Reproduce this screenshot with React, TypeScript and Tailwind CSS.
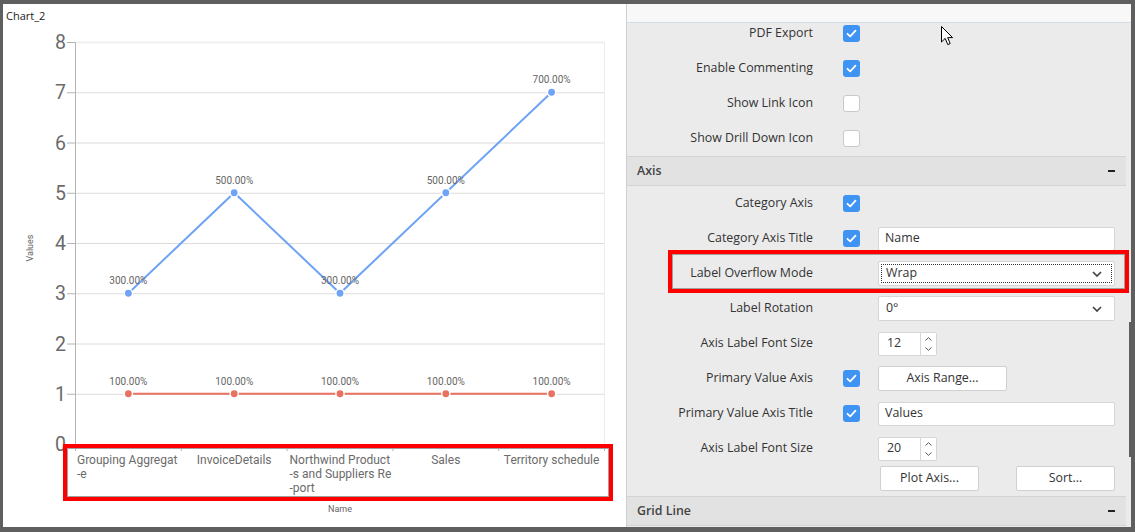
import React from "react";

const X0 = 75.5;
const CW = 105.8;
const cx = (i: number) => X0 + CW * (i + 0.5);
const cy = (v: number) => 444 - v * 50.25;
const blue = [3, 5, 3, 5, 7];
const red = [1, 1, 1, 1, 1];
const BLUE = "#6fa3f5";
const RED = "#e9715f";

function Check({ checked }: { checked: boolean }) {
  if (!checked)
    return <div className="w-[17px] h-[17px] rounded-[3px] bg-white border border-[#c9c9c9]" />;
  return (
    <div className="w-[17px] h-[17px] rounded-[3px] bg-[#3f94f3] flex items-center justify-center">
      <svg width="11" height="9" viewBox="0 0 11 9">
        <path d="M1.5 4.8 L4.2 7.3 L9.5 1.6" fill="none" stroke="#fff" strokeWidth="1.8" strokeLinecap="round" strokeLinejoin="round" />
      </svg>
    </div>
  );
}

function Row({ label, check, children }: { label: string; check?: boolean; children?: React.ReactNode }) {
  return (
    <div className="flex items-center h-[35px]">
      <div className="w-[186px] text-right whitespace-nowrap">{label}</div>
      <div className="w-[65px] pl-[30px] flex">{check !== undefined && <Check checked={check} />}</div>
      <div className="w-[237px]">{children}</div>
    </div>
  );
}

function TextBox({ value }: { value: string }) {
  return (
    <div className="h-[24px] bg-white border border-[#d6d6d6] rounded-[2px] pl-[6px] flex items-center pb-[1px]">{value}</div>
  );
}

function Chevron() {
  return (
    <svg width="10" height="6" viewBox="0 0 10 6">
      <path d="M1 1 L5 5 L9 1" fill="none" stroke="#444" strokeWidth="1.7" />
    </svg>
  );
}

function Select({ value, focused }: { value: string; focused?: boolean }) {
  return (
    <div className="h-[25px] bg-white border border-[#d6d6d6] rounded-[2px] p-[2px]">
      <div className={"h-full flex items-center justify-between pl-[4px] pr-[9px] " + (focused ? "border border-dotted border-[#333]" : "border border-transparent")}>
        <span className="pb-[1px]">{value}</span>
        <Chevron />
      </div>
    </div>
  );
}

function Spinner({ value }: { value: string }) {
  return (
    <div className="w-[59px] h-[24px] bg-white border border-[#d6d6d6] rounded-[2px] flex">
      <div className="w-[41px] pl-[8px] flex items-center pb-[1px]">{value}</div>
      <div className="flex-1 border-l border-[#d6d6d6] flex flex-col items-center justify-center gap-[6px]">
        <svg width="7" height="4" viewBox="0 0 7 4"><path d="M0.5 3.5 L3.5 0.7 L6.5 3.5" fill="none" stroke="#555" strokeWidth="1" /></svg>
        <svg width="7" height="4" viewBox="0 0 7 4"><path d="M0.5 0.5 L3.5 3.3 L6.5 0.5" fill="none" stroke="#555" strokeWidth="1" /></svg>
      </div>
    </div>
  );
}

function Btn({ label, w }: { label: string; w: string }) {
  return (
    <div className={"h-[25px] bg-white border border-[#d0d0d0] rounded-[2px] flex items-center justify-center pb-[1px] " + w}>{label}</div>
  );
}

function Header({ title }: { title: string }) {
  return (
    <div className="h-[30px] border-y border-[#d3d3d3] bg-[#e2e2e2] flex items-center justify-between pl-[10px] pr-[11px] font-semibold text-[#444]">
      <span>{title}</span>
      <div className="w-[7px] h-[2px] bg-[#222]" />
    </div>
  );
}

function Chart() {
  const pathOf = (vals: number[]) => vals.map((v, i) => `${i ? "L" : "M"}${cx(i)} ${cy(v)}`).join(" ");
  const ticks = [0, 1, 2, 3, 4, 5].map((i) => X0 + CW * i);
  return (
    <div className="relative w-[623px] h-full bg-white overflow-hidden">
      <div className="pl-[3px] pt-[5px] text-[11px] leading-[14px] text-[#222]" style={{ fontFamily: '"Open Sans", sans-serif' }}>
        Chart_2
      </div>
      <svg className="absolute left-0 top-0" width="623" height="523" style={{ fontFamily: "Roboto, sans-serif" }}>
        <g transform="translate(-3,-4)">
          {[1, 2, 3, 4, 5, 6, 7].map((v) => (
            <line key={v} x1={X0} x2={604} y1={cy(v) + 0.5} y2={cy(v) + 0.5} stroke="#dcdcdc" strokeWidth="1" />
          ))}
          <line x1={X0} x2={604} y1={42.5} y2={42.5} stroke="#f0f0f0" strokeWidth="2" />
          <line x1={604.5} x2={604.5} y1={42} y2={450} stroke="#ececec" strokeWidth="1" />
          {[0, 1, 2, 3, 4, 5, 6, 7, 8].map((v) => (
            <g key={v}>
              <line x1={67} x2={76} y1={cy(v) + 0.5} y2={cy(v) + 0.5} stroke="#b4b4b4" />
              <text x={66} y={cy(v) + 7} textAnchor="end" fontSize="19.5" fill="#6b6b6b">{v}</text>
            </g>
          ))}
          <line x1={X0} x2={X0} y1={42} y2={450} stroke="#b4b4b4" />
          <line x1={X0} x2={604} y1={444.5} y2={444.5} stroke="#b4b4b4" />
          {ticks.map((t, i) => (
            <line key={i} x1={t} x2={t} y1={444} y2={451} stroke="#b4b4b4" />
          ))}
          <path d={pathOf(blue)} fill="none" stroke={BLUE} strokeWidth="2" />
          <path d={pathOf(red)} fill="none" stroke={RED} strokeWidth="2" />
          {blue.map((v, i) => (
            <g key={"b" + i}>
              <circle cx={cx(i)} cy={cy(v)} r="4.8" fill="#fff" />
              <circle cx={cx(i)} cy={cy(v)} r="3.4" fill={BLUE} />
              <text x={cx(i)} y={cy(v) - 9} textAnchor="middle" fontSize="10" fill="#666">{v * 100}.00%</text>
            </g>
          ))}
          {red.map((v, i) => (
            <g key={"r" + i}>
              <circle cx={cx(i)} cy={cy(v)} r="4.8" fill="#fff" />
              <circle cx={cx(i)} cy={cy(v)} r="3.4" fill={RED} />
              <text x={cx(i)} y={cy(v) - 9} textAnchor="middle" fontSize="10" fill="#666">{v * 100}.00%</text>
            </g>
          ))}
          <text transform="translate(33,248) rotate(-90)" textAnchor="middle" fontSize="9" fill="#666">Values</text>
          <text x={340} y={512} textAnchor="middle" fontSize="9" fill="#666">Name</text>
          <g fontSize="12" fill="#6b6b6b">
            <text x={77} y={463.5}>Grouping Aggregat</text>
            <text x={77} y={477.5}>-e</text>
            <text x={cx(1)} y={463.5} textAnchor="middle">InvoiceDetails</text>
            <text x={289.5} y={463.5}>Northwind Product</text>
            <text x={289.5} y={477.5}>-s and Suppliers Re</text>
            <text x={289.5} y={491.5}>-port</text>
            <text x={cx(3)} y={463.5} textAnchor="middle">Sales</text>
            <text x={cx(4)} y={463.5} textAnchor="middle">Territory schedule</text>
          </g>
        </g>
      </svg>
    </div>
  );
}

function Panel() {
  return (
    <div className="w-[505px] h-full border-l border-[#cfcfcf] bg-[#ebebeb] flex flex-col text-[12.4px] text-[#333]" style={{ fontFamily: '"Open Sans", sans-serif' }}>
      <div className="h-[19px] shrink-0 bg-[#f8f8f8] border-b border-[#d5dde5]" />
      <div className="flex flex-1 min-h-0">
        <div className="w-[499px] overflow-hidden">
          <div className="-mt-[7px]">
            <Row label="PDF Export" check={true} />
            <Row label="Enable Commenting" check={true} />
            <Row label="Show Link Icon" check={false} />
            <Row label="Show Drill Down Icon" check={false} />
            <Header title="Axis" />
            <Row label="Category Axis" check={true} />
            <Row label="Category Axis Title" check={true}>
              <TextBox value="Name" />
            </Row>
            <Row label="Label Overflow Mode">
              <Select value="Wrap" focused />
            </Row>
            <Row label="Label Rotation">
              <Select value="0°" />
            </Row>
            <Row label="Axis Label Font Size">
              <Spinner value="12" />
            </Row>
            <Row label="Primary Value Axis" check={true}>
              <Btn label="Axis Range..." w="w-[129px]" />
            </Row>
            <Row label="Primary Value Axis Title" check={true}>
              <TextBox value="Values" />
            </Row>
            <Row label="Axis Label Font Size">
              <Spinner value="20" />
            </Row>
            <div className="h-[30px] flex pl-[253px]">
              <Btn label="Plot Axis..." w="w-[99px]" />
              <div className="w-[37px]" />
              <Btn label="Sort..." w="w-[99px]" />
            </div>
            <Header title="Grid Line" />
          </div>
        </div>
        <div className="w-[5px] pt-[299px] flex flex-col items-end">
          <div className="w-[2px] h-[135px] bg-[#5f5f5f]" />
        </div>
      </div>
    </div>
  );
}

export default function App() {
  return (
    <div className="relative w-[1135px] h-[532px] bg-[#5f5f5f] pt-[4px] pl-[3px] pr-[4px] pb-[5px] flex overflow-hidden">
      <Chart />
      <Panel />
      <div className="absolute left-[63px] top-[444px] w-[550px] h-[57px] border-[4px] border-[#ff0000] shadow-[inset_0_0_0_1px_#a0a0a0]" />
      <div className="absolute left-[668px] top-[250px] w-[461px] h-[43px] border-[4px] border-[#ff0000] shadow-[inset_0_0_0_1px_#a0a0a0]" />
      <svg className="absolute left-[941px] top-[26px]" width="13" height="20" viewBox="0 0 13 20">
        <path d="M0.5 0.5 L0.5 16 L4.2 12.4 L6.8 18.6 L9.2 17.6 L6.7 11.6 L11.6 11.6 Z" fill="#fff" stroke="#000" strokeWidth="1" strokeLinejoin="miter" />
      </svg>
    </div>
  );
}
